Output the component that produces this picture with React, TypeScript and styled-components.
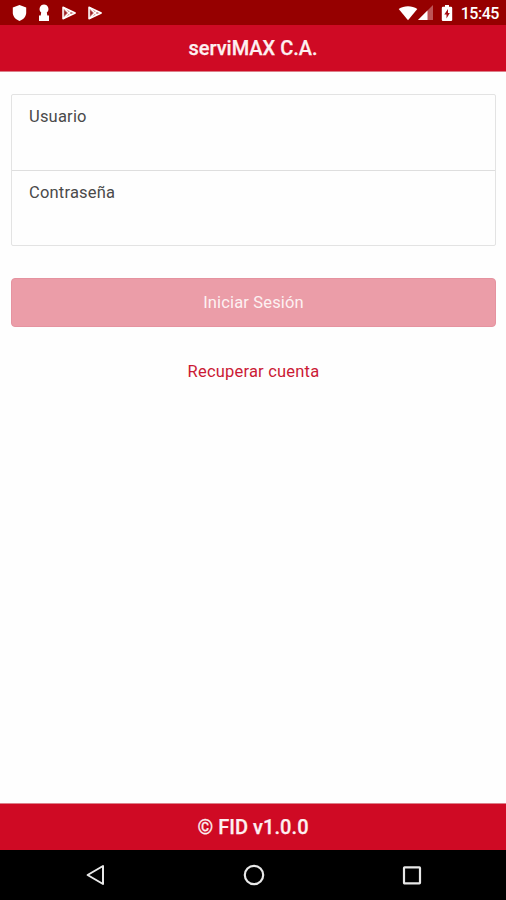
import React from "react";
import styled, { createGlobalStyle } from "styled-components";

const GlobalStyle = createGlobalStyle`
  *, *::before, *::after { box-sizing: border-box; }
  html, body { margin: 0; padding: 0; background: #fefefe; }
  body { font-family: Roboto, "Liberation Sans", sans-serif; }
`;

const Screen = styled.div`
  display: flex;
  flex-direction: column;
  width: 506px;
  height: 900px;
  overflow: hidden;
  background: #fefefe;
`;

const StatusBar = styled.div`
  flex: none;
  display: flex;
  align-items: center;
  justify-content: space-between;
  height: 25px;
  padding: 1px 7px 0 12px;
  background: #960000;
  color: #fff;
`;

const StatusIcons = styled.div`
  display: flex;
  align-items: center;
`;

const Notifications = styled(StatusIcons)`
  gap: 10px;
`;

const Charge = styled.span`
  display: flex;
  margin: 0 8px;
`;

const Clock = styled.span`
  padding-top: 1px;
  font-size: 16px;
  font-weight: 500;
  letter-spacing: -0.45px;
  line-height: 24px;
`;

const Bar = styled.div<{ $edge: "top" | "bottom" }>`
  flex: none;
  display: flex;
  align-items: center;
  justify-content: center;
  height: 47px;
  background: #cf0a24;
  color: #fdf0f1;
  border-${(p) => p.$edge}: 1px solid #dc7f89;
`;

const BarTitle = styled.h1<{ $spacing: number }>`
  margin: 0;
  font-size: 20px;
  font-weight: 500;
  line-height: 24px;
  letter-spacing: ${(p) => p.$spacing}px;
  -webkit-text-stroke: 0.25px currentColor;
`;

const Content = styled.main`
  flex: 1;
  display: flex;
  flex-direction: column;
  padding: 22px 10px 0 11px;
`;

const FieldGroup = styled.div`
  border: 1px solid #e3e3e3;
  border-radius: 2px;
`;

const Field = styled.label`
  display: block;
  height: 75px;
  padding: 12px 17px;
  color: #4a4a4a;
  font-size: 16.5px;
  line-height: 20px;
  letter-spacing: 0.2px;

  & + & {
    height: 75px;
    border-top: 1px solid #dedede;
  }
`;

const SubmitButton = styled.button`
  height: 49px;
  margin-top: 32px;
  padding: 0;
  border: 1px solid #e593a0;
  border-radius: 4px;
  background: #eb9da8;
  color: #fdf1f2;
  font: 400 16.5px/20px Roboto, sans-serif;
  letter-spacing: 0.15px;
`;

const RecoverLink = styled.a`
  align-self: center;
  margin-top: 35px;
  color: #cb1a35;
  font-size: 16.5px;
  line-height: 20px;
  letter-spacing: 0.2px;
`;

const NavBar = styled.nav`
  flex: none;
  display: flex;
  align-items: center;
  justify-content: space-between;
  height: 50px;
  padding: 0 83px 0 84px;
  background: #000;
`;

const Shield = () => (
  <svg width="15" height="18" viewBox="0 0 15 18">
    <path d="M7.5 1 14.2 3.5V8.5C14.2 12.5 11.5 15.5 7.5 17 3.5 15.5.8 12.5.8 8.5V3.5Z" fill="#fff" />
  </svg>
);

const Keyhole = () => (
  <svg width="14" height="18" viewBox="0 0 14 18">
    <path d="M7 .5A4.6 4.6 0 0 1 9.8 8.6L10.3 11.5H12V17H2V11.5H3.7L4.2 8.6A4.6 4.6 0 0 1 7 .5Z" fill="#fff" />
  </svg>
);

const PlayStore = () => (
  <svg width="16" height="16" viewBox="0 0 16 16" fill="none" stroke="#fff" strokeLinejoin="round">
    <path d="M2 2.2 14.2 8 2 13.8Z" fill="#fff" fillOpacity=".45" strokeWidth="1.5" />
    <path d="M2.5 2.5 9.8 10M2.5 13.5 9.8 6" strokeWidth="1.3" />
    <path d="M3.4 5.5 5.9 8 3.4 10.5Z" fill="#9b2025" stroke="none" />
  </svg>
);

const Wifi = () => (
  <svg width="20" height="16" viewBox="0 0 20 16">
    <path d="M.7 4C6 .2 14 .2 19.3 4L10 15.3Z" fill="#fff" />
  </svg>
);

const Signal = () => (
  <svg width="15" height="16" viewBox="0 0 15 16">
    <path d="M0 15 15 0V15Z" fill="#bd5557" />
    <path d="M0 15 9.5 5.5V15Z" fill="#fff" />
  </svg>
);

const Battery = () => (
  <svg width="12" height="18" viewBox="0 0 12 18">
    <path d="M4 1H8V2.7H10Q11.2 2.7 11.2 4V16Q11.2 17 10 17H2Q.8 17 .8 16V4Q.8 2.7 2 2.7H4Z" fill="#fff" />
    <path d="M7 5 3.3 10.5H5.5V14.5L8.8 9H7Z" fill="#a50b12" />
  </svg>
);

const Back = () => (
  <svg width="22" height="24" viewBox="0 0 22 24" fill="none" stroke="#e8e8e8">
    <path d="M19 3V21L3.6 12Z" strokeWidth="2" strokeLinejoin="round" />
  </svg>
);

const Home = () => (
  <svg width="22" height="22" viewBox="0 0 22 22" fill="none" stroke="#e8e8e8">
    <circle cx="11" cy="11" r="9.2" strokeWidth="2.2" />
  </svg>
);

const Recents = () => (
  <svg width="22" height="22" viewBox="0 0 22 22" fill="none" stroke="#e8e8e8">
    <rect x="3" y="3.3" width="16" height="16" rx=".6" strokeWidth="2.2" />
  </svg>
);

export default function App() {
  return (
    <>
      <GlobalStyle />
      <Screen>
        <StatusBar>
          <Notifications>
            <Shield />
            <Keyhole />
            <PlayStore />
            <PlayStore />
          </Notifications>
          <StatusIcons>
            <Wifi />
            <Signal />
            <Charge>
              <Battery />
            </Charge>
            <Clock>15:45</Clock>
          </StatusIcons>
        </StatusBar>
        <Bar $edge="bottom">
          <BarTitle $spacing={0}>serviMAX C.A.</BarTitle>
        </Bar>
        <Content>
          <FieldGroup>
            <Field>Usuario</Field>
            <Field>Contraseña</Field>
          </FieldGroup>
          <SubmitButton disabled>Iniciar Sesión</SubmitButton>
          <RecoverLink>Recuperar cuenta</RecoverLink>
        </Content>
        <Bar as="footer" $edge="top">
          <BarTitle as="div" $spacing={0.05}>© FID v1.0.0</BarTitle>
        </Bar>
        <NavBar>
          <Back />
          <Home />
          <Recents />
        </NavBar>
      </Screen>
    </>
  );
}
